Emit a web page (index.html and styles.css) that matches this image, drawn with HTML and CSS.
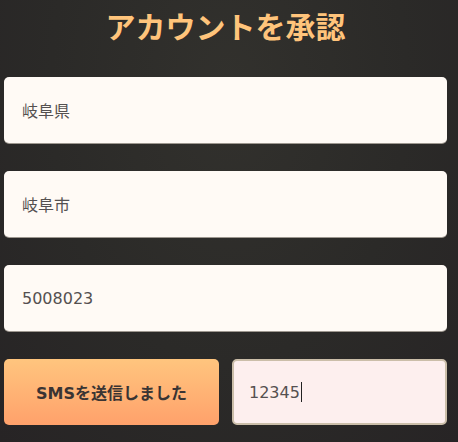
FILE: index.html
```html
<!DOCTYPE html>
<html lang="ja">
<head>
<meta charset="utf-8">
<link rel="stylesheet" href="styles.css">
</head>
<body>
<main class="page">
  <h1 class="title">アカウントを承認</h1>
  <div class="field">岐阜県</div>
  <div class="field">岐阜市</div>
  <div class="field">5008023</div>
  <div class="row">
    <button class="sms-btn">SMSを送信しました</button>
    <div class="code">12345<span class="caret"></span></div>
  </div>
</main>
</body>
</html>
```
FILE: styles.css
```css
html, body {
  margin: 0;
  padding: 0;
  height: 100%;
}
body {
  background: radial-gradient(ellipse at 50% 20%, #32312d 0%, #2b2a28 55%, #272425 100%);
  font-family: "DejaVu Sans", "Noto Sans CJK JP", sans-serif;
  overflow: hidden;
}
.page {
  width: 443px;
  margin-left: 4px;
  display: flex;
  flex-direction: column;
  gap: 28px;
}
.title {
  margin: 7px 0 6px;
  font-size: 30px;
  line-height: 36px;
  font-weight: 700;
  color: #ffc47b;
  text-align: center;
  font-family: "Noto Sans CJK JP", sans-serif;
}
.field {
  box-sizing: border-box;
  height: 66px;
  background: #fffaf5;
  border-radius: 5px;
  box-shadow: 0 1px 0 #9d978f;
  padding-left: 18px;
  display: flex;
  align-items: center;
  font-size: 16px;
  color: #545050;
}
.row {
  display: grid;
  grid-template-columns: 215px 215px;
  gap: 13px;
}
.sms-btn {
  height: 66px;
  border: none;
  border-radius: 5px;
  background: linear-gradient(180deg, #ffc57e 0%, #ffa16b 100%);
  font-family: "DejaVu Sans", "Noto Sans CJK JP", sans-serif;
  font-size: 16px;
  font-weight: 700;
  color: #3a3433;
  padding: 0;
}
.code {
  box-sizing: border-box;
  height: 66px;
  background: #fdefee;
  border: 2px solid #cbbea9;
  border-radius: 5px;
  padding-left: 15px;
  display: flex;
  align-items: center;
  font-size: 16px;
  color: #555050;
}
.caret {
  display: inline-block;
  width: 1px;
  height: 20px;
  background: #222;
  margin-left: 1px;
}
```
